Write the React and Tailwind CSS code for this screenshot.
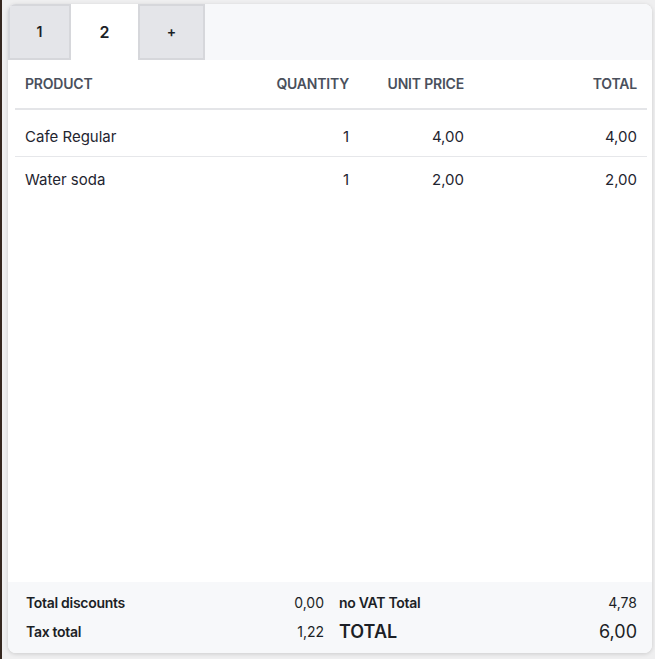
const items = [
  { name: 'Cafe Regular', qty: 1, price: '4,00', total: '4,00' },
  { name: 'Water soda', qty: 1, price: '2,00', total: '2,00' }
];

const font = { fontFamily: 'Inter, Lato, sans-serif' };

export default function App() {
  return (
    <div className="h-[659px] w-[655px] border-l-2 border-[#35271f] bg-[#efeff0] pb-[6px] pl-[6px] pr-[3px] pt-1" style={font}>
      <div className="flex h-full flex-col overflow-hidden rounded-lg bg-white shadow-[0_1px_4px_rgba(0,0,0,0.15)]">
        <div className="flex h-[56px] shrink-0 bg-[#f7f8fa]">
          <button className="h-full w-[63px] border-2 border-[#d6d7db] bg-[#e4e5e9] text-sm font-semibold text-[#1c1f26]">1</button>
          <button className="h-full w-[67px] bg-white text-base font-semibold text-[#1c1f26]">2</button>
          <button className="h-full w-[67px] border-2 border-[#d6d7db] bg-[#e4e5e9] text-sm font-semibold text-[#1c1f26]">+</button>
        </div>
        <div className="flex-1 pl-[7px] pr-[5px]">
          <div className="grid h-[50px] grid-cols-[1fr_98px_115px_173px] items-center border-b-2 border-[#e4e5e8] text-sm font-semibold uppercase tracking-[-0.2px] text-[#4a505c]">
            <div className="px-[10px]">Product</div>
            <div className="px-[10px] text-right">Quantity</div>
            <div className="px-[10px] text-right">Unit price</div>
            <div className="px-[10px] text-right">Total</div>
          </div>
          {items.map((item, i) => (
            <div
              key={item.name}
              className={`grid h-[47px] grid-cols-[1fr_98px_115px_173px] text-[15px] leading-5 text-[#1f2530] ${i === 0 ? 'border-b border-[#e6e7ea] pt-[17px]' : 'pt-[13px]'}`}
            >
              <div className="px-[10px]">{item.name}</div>
              <div className="px-[10px] text-right">{item.qty}</div>
              <div className="px-[10px] text-right">{item.price}</div>
              <div className="px-[10px] text-right">{item.total}</div>
            </div>
          ))}
        </div>
        <div className="grid h-[71px] shrink-0 grid-cols-[314px_1fr] content-start gap-y-[9px] bg-[#f7f8fa] pl-[10px] pr-[5px] pt-[11px] text-[#1c1f26]">
          <div className="flex h-5 items-center justify-between px-2">
            <span className="text-sm font-semibold tracking-[-0.3px]">Total discounts</span>
            <span className="text-sm">0,00</span>
          </div>
          <div className="flex h-5 items-center justify-between pl-[7px] pr-[10px]">
            <span className="text-sm font-semibold tracking-[-0.3px]">no VAT Total</span>
            <span className="text-sm">4,78</span>
          </div>
          <div className="flex h-5 items-center justify-between px-2">
            <span className="text-sm font-semibold tracking-[-0.3px]">Tax total</span>
            <span className="text-sm">1,22</span>
          </div>
          <div className="flex h-5 items-center justify-between pl-[7px] pr-[10px]">
            <span className="text-lg font-semibold">TOTAL</span>
            <span className="text-lg">6,00</span>
          </div>
        </div>
      </div>
    </div>
  );
}
